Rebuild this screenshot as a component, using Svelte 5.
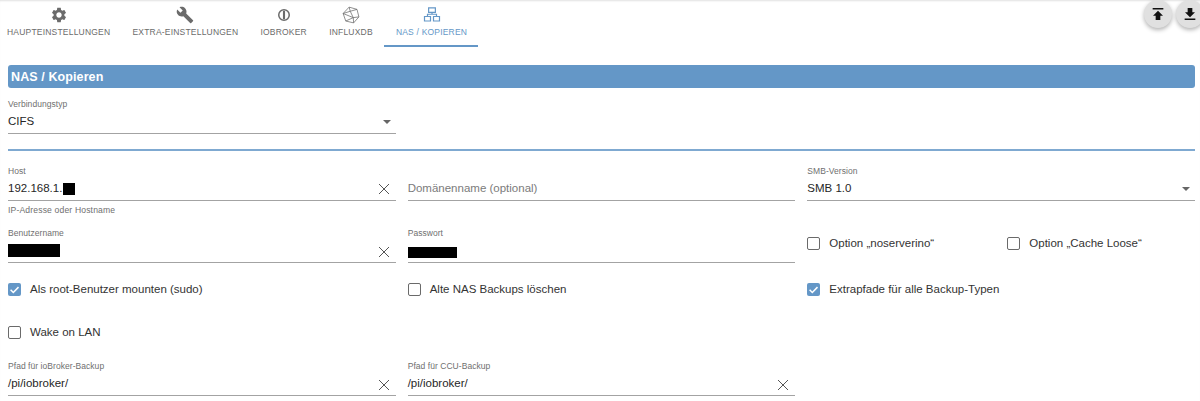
<script>
  const tabs = [
    { label: 'Haupteinstellungen', icon: 'gear' },
    { label: 'Extra-Einstellungen', icon: 'wrench' },
    { label: 'ioBroker', icon: 'io' },
    { label: 'InfluxDB', icon: 'influx' },
    { label: 'NAS / Kopieren', icon: 'net', active: true }
  ];
</script>

{#snippet clear()}
  <svg class="clear" viewBox="0 0 12 12"><path d="M1 1l10 10M11 1L1 11" /></svg>
{/snippet}

{#snippet arrow()}
  <span class="arrow"></span>
{/snippet}

{#snippet check(label, on)}
  <div class="check">
    <span class="box" class:on>
      {#if on}<svg viewBox="0 0 12 12"><path d="M2.4 6.3l2.5 2.5 4.8-5" /></svg>{/if}
    </span>
    <span>{label}</span>
  </div>
{/snippet}

<div class="page">
  <nav class="tabs">
    {#each tabs as t}
      <div class="tab" class:active={t.active}>
        <svg class="ticon" viewBox="0 0 24 24">
          {#if t.icon === 'gear'}
            <path d="M19.14 12.94c.04-.3.06-.61.06-.94 0-.32-.02-.64-.07-.94l2.03-1.58c.18-.14.23-.41.12-.61l-1.92-3.32c-.12-.22-.37-.29-.59-.22l-2.39.96c-.5-.38-1.03-.7-1.62-.94l-.36-2.54c-.04-.24-.24-.41-.48-.41h-3.84c-.24 0-.43.17-.47.41l-.36 2.54c-.59.24-1.13.57-1.62.94l-2.39-.96c-.22-.08-.47 0-.59.22L2.74 8.87c-.12.21-.08.47.12.61l2.03 1.58c-.05.3-.09.63-.09.94s.02.64.07.94l-2.03 1.58c-.18.14-.23.41-.12.61l1.92 3.32c.12.22.37.29.59.22l2.39-.96c.5.38 1.03.7 1.62.94l.36 2.54c.05.24.24.41.48.41h3.84c.24 0 .44-.17.47-.41l.36-2.54c.59-.24 1.13-.56 1.62-.94l2.39.96c.22.08.47 0 .59-.22l1.92-3.32c.12-.22.07-.47-.12-.61l-2.01-1.58zM12 15.6c-1.98 0-3.6-1.62-3.6-3.6s1.62-3.6 3.6-3.6 3.6 1.62 3.6 3.6-1.62 3.6-3.6 3.6z" />
          {:else if t.icon === 'wrench'}
            <path d="M22.7 19l-9.1-9.1c.9-2.3.4-5-1.5-6.9-2-2-5-2.4-7.4-1.3L9 6 6 9 1.6 4.7C.4 7.1.9 10.1 2.9 12.1c1.9 1.9 4.6 2.4 6.9 1.5l9.1 9.1c.4.4 1 .4 1.4 0l2.3-2.3c.5-.4.5-1.1.1-1.4z" />
          {:else if t.icon === 'io'}
            <circle class="ln" cx="12" cy="12" r="7" />
            <rect x="10.600" y="6.500" width="2.800" height="11" />
          {:else if t.icon === 'influx'}
            <path class="ln thin" d="M9.500 1.500L20 4.500 22.500 14.500 15.500 22.500 5 20 1.500 10zM9.500 1.500L11 7 1.500 10M11 7L20 4.500M11 7L15 15.500 22.500 14.500M15 15.500L15.500 22.500M15 15.500L5 20M15 15.500L1.500 10" />
          {:else}
            <path class="ln mid" d="M7.500 2.500h9v6h-9zM2 14h8v6H2zM14 14h8v6h-8zM12 8.500V11M6 14v-3h12v3" />
          {/if}
        </svg>
        <span>{t.label}</span>
      </div>
    {/each}
  </nav>

  <div class="fabs">
    <button class="fab" aria-label="Upload">
      <svg viewBox="0 0 24 24"><path d="M4 3h16v2.200H4zM12 7l7.500 7.500H15.500V21h-7v-6.500H4.500z" /></svg>
    </button>
    <button class="fab" aria-label="Download">
      <svg viewBox="0 0 24 24"><path d="M8.500 3h7v6.500h4L12 17 4.500 9.500h4zM4 18.800h16V21H4z" /></svg>
    </button>
  </div>

  <main class="content">
    <h2 class="head">NAS / Kopieren</h2>

    <div class="grid type-row">
      <div class="field">
        <div class="label">Verbindungstyp</div>
        <div class="value">CIFS {@render arrow()}</div>
      </div>
    </div>

    <hr class="divider" />

    <div class="grid host-row">
      <div class="field">
        <div class="label">Host</div>
        <div class="value">
          <span class="with-block">192.168.1.<i class="mask ip"></i></span>
          {@render clear()}
        </div>
        <div class="help">IP-Adresse oder Hostname</div>
      </div>
      <div class="field">
        <div class="label">&nbsp;</div>
        <div class="value placeholder">Domänenname (optional)</div>
      </div>
      <div class="field">
        <div class="label">SMB-Version</div>
        <div class="value">SMB 1.0 {@render arrow()}</div>
      </div>
    </div>

    <div class="grid user-row">
      <div class="field">
        <div class="label">Benutzername</div>
        <div class="value"><i class="mask user"></i>{@render clear()}</div>
      </div>
      <div class="field">
        <div class="label">Passwort</div>
        <div class="value"><i class="mask pass"></i></div>
      </div>
      <div class="opts">
        {@render check('Option „noserverino“', false)}
        {@render check('Option „Cache Loose“', false)}
      </div>
    </div>

    <div class="grid check-row first">
      {@render check('Als root-Benutzer mounten (sudo)', true)}
      {@render check('Alte NAS Backups löschen', false)}
      {@render check('Extrapfade für alle Backup-Typen', true)}
    </div>

    <div class="grid check-row second">
      {@render check('Wake on LAN', false)}
    </div>

    <div class="grid path-row">
      <div class="field">
        <div class="label">Pfad für ioBroker-Backup</div>
        <div class="value">/pi/iobroker/ {@render clear()}</div>
      </div>
      <div class="field">
        <div class="label">Pfad für CCU-Backup</div>
        <div class="value">/pi/iobroker/ {@render clear()}</div>
      </div>
    </div>
  </main>
</div>

<style>
  :global(body) {
    margin: 0;
    background: #fff;
    font-family: "Liberation Sans", Arial, sans-serif;
    overflow: hidden;
  }
  .page {
    position: relative;
    height: 401px;
    overflow: hidden;
    color: #262626;
    box-shadow: inset 0 2px 2px -1px rgba(0, 0, 0, 0.12);
  }
  .tabs {
    display: flex;
    height: 47px;
    box-sizing: border-box;
  }
  .tab {
    display: flex;
    flex-direction: column;
    align-items: center;
    box-sizing: border-box;
    padding: 6px 11.100px 0;
    height: 47px;
    color: #6b6b6b;
    font-size: 8.500px;
    letter-spacing: 0.2px;
    text-transform: uppercase;
    white-space: nowrap;
  }
  .tab:first-child { padding-left: 7px; }
  .tab.active {
    color: #6497c7;
    border-bottom: 2px solid #6497c7;
    padding-left: 12px;
    padding-right: 11px;
  }
  .tab span { margin-top: 2px; line-height: 12px; }
  .ticon { width: 18px; height: 18px; fill: currentColor; }
  .ln { fill: none; stroke: currentColor; stroke-width: 2; }
  .mid { stroke-width: 1.600; }
  .thin { stroke-width: 1; }

  .fabs {
    position: absolute;
    top: 0;
    left: 1144px;
    display: flex;
    gap: 4px;
  }
  .fab {
    width: 28px;
    height: 28px;
    padding: 0;
    border: 0;
    border-radius: 50%;
    background: #e0e0e0;
    box-shadow: 0 2px 4px rgba(0, 0, 0, 0.3);
    display: grid;
    place-items: center;
  }
  .fab svg { width: 16px; height: 16px; fill: #111; }

  .content { padding: 18px 5px 0 8px; }
  .head {
    margin: 0;
    height: 23px;
    line-height: 25px;
    padding-left: 3px;
    background: #6497c7;
    border-radius: 3px;
    color: #fff;
    font-size: 12.500px;
    font-weight: 700;
    letter-spacing: 0.1px;
  }
  .grid {
    display: grid;
    grid-template-columns: repeat(3, 1fr);
    gap: 12px;
  }
  .field { min-width: 0; }
  .label {
    font-size: 8.500px;
    line-height: 12px;
    color: #6f6f6f;
    letter-spacing: 0.05px;
  }
  .value {
    position: relative;
    height: 21px;
    margin-top: 3px;
    box-sizing: border-box;
    font-size: 11.500px;
    line-height: 17px;
    color: #262626;
    border-bottom: 1px solid #a3a3a3;
    display: flex;
    align-items: flex-start;
    justify-content: space-between;
  }
  .placeholder { color: #7b7b7b; }
  .with-block { display: flex; }
  .mask { display: block; background: #000; }
  .mask.ip { width: 12px; height: 12px; margin-top: 3px; margin-left: 1px; }
  .mask.user { width: 52px; height: 13px; margin-top: 2px; }
  .mask.pass { width: 49px; height: 11px; margin-top: 5px; }
  .clear {
    width: 12px;
    height: 12px;
    margin: 4px 6px 0 0;
    fill: none;
    stroke: #555;
    stroke-width: 1;
  }
  .host-row .clear { margin-top: 3px; }
  .arrow {
    width: 0;
    height: 0;
    margin: 7px 5px 0 0;
    border-left: 4px solid transparent;
    border-right: 4px solid transparent;
    border-top: 4px solid #666;
  }
  .help {
    margin-top: 3px;
    font-size: 8.600px;
    line-height: 12px;
    color: #6f6f6f;
    letter-spacing: 0.15px;
  }
  .type-row { margin-top: 10px; }
  .divider {
    margin: 15px 0 0;
    border: 0;
    height: 2px;
    background: #7fa9d1;
  }
  .host-row { margin-top: 14px; }
  .user-row { margin-top: 11px; align-items: end; }
  .user-row .opts {
    display: grid;
    grid-template-columns: 200px 1fr;
    padding-bottom: 12px;
  }
  .check {
    display: flex;
    align-items: center;
    gap: 9px;
    font-size: 11.500px;
    line-height: 16px;
    color: #333;
    white-space: nowrap;
  }
  .box {
    width: 13px;
    height: 13px;
    box-sizing: border-box;
    border: 1.500px solid #6a6a6a;
    border-radius: 2px;
    flex: none;
    display: block;
  }
  .box.on { background: #6497c7; border: 0; }
  .box svg { display: block; width: 13px; height: 13px; fill: none; stroke: #fff; stroke-width: 1.400; }
  .check-row.first { margin-top: 18px; }
  .check-row.second { margin-top: 27px; }
  .path-row { margin-top: 20px; }
</style>
